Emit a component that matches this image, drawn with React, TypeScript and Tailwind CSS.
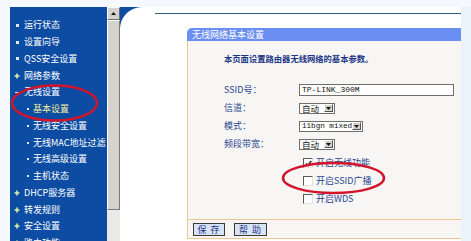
import React from 'react';

type Kind = 'dot' | 'plus' | 'minus' | 'sub';

const menu: { text: string; kind: Kind; active?: boolean }[] = [
  { text: '运行状态', kind: 'dot' },
  { text: '设置向导', kind: 'dot' },
  { text: 'QSS安全设置', kind: 'dot' },
  { text: '网络参数', kind: 'plus' },
  { text: '无线设置', kind: 'minus' },
  { text: '基本设置', kind: 'sub', active: true },
  { text: '无线安全设置', kind: 'sub' },
  { text: '无线MAC地址过滤', kind: 'sub' },
  { text: '无线高级设置', kind: 'sub' },
  { text: '主机状态', kind: 'sub' },
  { text: 'DHCP服务器', kind: 'plus' },
  { text: '转发规则', kind: 'plus' },
  { text: '安全设置', kind: 'plus' },
  { text: '路由功能', kind: 'plus' },
];

const Marker: React.FC<{ kind: Kind }> = ({ kind }) => {
  if (kind === 'plus') {
    return (
      <svg width="6" height="6" viewBox="0 0 6 6" className="shrink-0">
        <path d="M3 0.5V5.5M0.5 3H5.5" stroke="#d8f0b0" strokeWidth="1.6" />
      </svg>
    );
  }
  if (kind === 'minus') {
    return <span className="block w-[4px] h-[1px] bg-[#d8e4f4] shrink-0" />;
  }
  return <span className="block w-[3px] h-[3px] bg-[#e0e8f4] shrink-0" />;
};

const Select: React.FC<{ text: string; width: string; mono?: boolean }> = ({ text, width, mono }) => (
  <div className={`flex h-[11px] items-center justify-between whitespace-nowrap border border-[#6f6f6f] bg-white pl-[2px] pr-[1px] ${width}`}>
    <span
      className={
        mono
          ? "font-['Liberation_Mono',monospace] text-[7.6px] leading-[9px] text-[#111]"
          : 'text-[8.5px] leading-[9px] text-[#111]'
      }
    >
      {text}
    </span>
    <span className="flex h-[8px] w-[9px] shrink-0 items-center justify-center border-t border-l border-white border-r border-b border-r-[#555] border-b-[#555] bg-[#d4d0c8]">
      <svg width="5" height="3" viewBox="0 0 5 3">
        <path d="M0 0H5L2.5 3Z" fill="#111" />
      </svg>
    </span>
  </div>
);

const Check: React.FC<{ label: string; checked?: boolean }> = ({ label, checked }) => (
  <div className="flex h-[18px] items-center pl-[115px]">
    <span className="flex h-[10px] w-[10px] items-center justify-center border-t border-l border-[#5a5a5a] border-r border-b border-r-[#e4e4e4] border-b-[#e4e4e4] bg-white">
      {checked && (
        <svg width="7" height="7" viewBox="0 0 7 7">
          <path d="M1 3.5L3 5.5L6.2 1" fill="none" stroke="#222" strokeWidth="1.5" />
        </svg>
      )}
    </span>
    <span className="ml-[3px] whitespace-nowrap text-[9px] leading-[10px] text-[#2a4590]">{label}</span>
  </div>
);

const Row: React.FC<{ label: string; children: React.ReactNode }> = ({ label, children }) => (
  <div className="flex h-[18px] items-center">
    <span className="w-[111px] shrink-0 whitespace-nowrap pl-[36px] text-[9px] leading-[10px] text-[#2a4590]">{label}</span>
    {children}
  </div>
);

export default function App() {
  return (
    <div className="relative w-[471px] h-[241px] overflow-hidden bg-[#f5f8fc] font-['Noto_Sans_CJK_SC',sans-serif]">
      <div className="flex h-full pt-[7px] pl-[10px]">
        {/* left menu */}
        <div className="w-[97px] shrink-0 bg-[#0c4ca2] pt-[10px] text-[9px] text-white">
          {menu.map((item, i) => (
            <div key={i} className="flex h-[16.75px] items-center whitespace-nowrap">
              {item.kind === 'sub' ? (
                <>
                  <span className="ml-[17px] block w-[2px] h-[2px] shrink-0 bg-[#e0e8f4]" />
                  <span className={`ml-[4px] leading-[12px] ${item.active ? 'text-[#f2f0a0]' : 'text-white'}`}>
                    {item.text}
                  </span>
                </>
              ) : (
                <>
                  <span className="ml-[4px] flex w-[6px] shrink-0 justify-center">
                    <Marker kind={item.kind} />
                  </span>
                  <span className="ml-[4px] leading-[12px]">{item.text}</span>
                </>
              )}
            </div>
          ))}
        </div>

        {/* scrollbar */}
        <div className="flex w-[13px] shrink-0 flex-col bg-[#ebe9e5]">
          <div className="flex h-[13px] items-center justify-center border-t border-l border-white border-r border-b border-r-[#6a6a6a] border-b-[#6a6a6a] bg-[#d6d3ce]">
            <svg width="5" height="3" viewBox="0 0 5 3">
              <path d="M2.5 0L5 3H0Z" fill="#111" />
            </svg>
          </div>
          <div className="h-[190px] border-t border-l border-white border-r border-b border-r-[#7a7a7a] border-b-[#7a7a7a] bg-[#d6d3ce]" />
        </div>

        {/* main */}
        <div className="flex-1 bg-[#0c4ca2]">
          <div className="flex h-full flex-col rounded-tl-[22px] bg-white">
            <div className="ml-[35px] mt-[6px] h-px bg-[#2f5b78]" />
            <div className="ml-[67px] mt-[14px] flex flex-col">
              <div className="h-[13px] whitespace-nowrap rounded-tl-[5px] bg-[#6a8ef2] pl-[5px] text-[9px] leading-[13px] text-white">
                无线网络基本设置
              </div>
              <div className="border-l border-[#f0c590] bg-[#f7f6f4]">
                <div className="pt-[11px] pl-[36px] h-[23px] whitespace-nowrap text-[8.3px] leading-[12px] font-semibold text-[#1d3686]">
                  本页面设置路由器无线网络的基本参数。
                </div>
                <div className="mt-[17px]">
                  <Row label="SSID号：">
                    <div className="flex h-[12px] w-[155px] items-center border border-[#6f6f6f] bg-white pl-[2px] font-['Liberation_Mono',monospace] text-[8px] text-[#111]">
                      TP-LINK_300M
                    </div>
                  </Row>
                  <Row label="信道：">
                    <Select text="自动" width="w-[36px]" />
                  </Row>
                  <Row label="模式：">
                    <Select text="11bgn mixed" width="w-[64px]" mono />
                  </Row>
                  <Row label="频段带宽：">
                    <Select text="自动" width="w-[36px]" />
                  </Row>
                </div>
                <div className="mt-[1px]">
                  <Check label="开启无线功能" checked />
                  <Check label="开启SSID广播" />
                  <Check label="开启WDS" />
                </div>
                <div className="mt-[11px] flex h-[20px] items-center gap-[9px] border-t border-b border-[#f0c590] pl-[5px]">
                  <button className="h-[13px] w-[32px] whitespace-nowrap border border-[#3a3a3a] bg-[#d9e3f6] pl-[3px] text-[9px] leading-[11px] tracking-[4px] text-[#1d3686]">
                    保存
                  </button>
                  <button className="h-[13px] w-[33px] whitespace-nowrap border border-[#3a3a3a] bg-[#d9e3f6] pl-[3px] text-[9px] leading-[11px] tracking-[4px] text-[#1d3686]">
                    帮助
                  </button>
                </div>
              </div>
            </div>
          </div>
        </div>

        <div className="w-[10px] shrink-0 bg-[#eaf2fb]" />
      </div>

      {/* red highlight marks */}
      <svg className="pointer-events-none absolute left-0 top-0" width="471" height="241">
        <ellipse cx="54.5" cy="103" rx="42.5" ry="17.5" fill="none" stroke="#d3142c" strokeWidth="2.5" />
        <ellipse cx="333.5" cy="178" rx="50.5" ry="15" fill="none" stroke="#d3142c" strokeWidth="2.5" />
      </svg>
    </div>
  );
}
